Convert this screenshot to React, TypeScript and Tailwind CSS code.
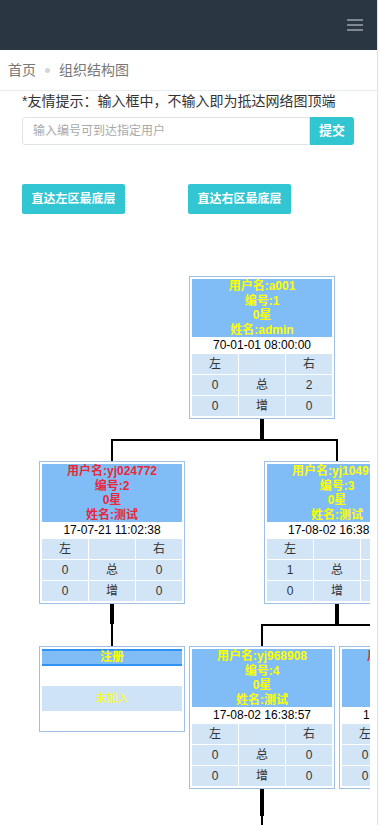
import clsx from "clsx";

type Node = {
  kind: "user" | "empty";
  name?: string;
  no?: number;
  real?: string;
  date?: string;
  red?: boolean;
  rows?: [string, string, string][];
  longStem?: boolean;
  children?: Node[];
};

const empty: Node = { kind: "empty" };

const tree: Node = {
  kind: "user",
  name: "a001",
  no: 1,
  real: "admin",
  date: "70-01-01 08:00:00",
  rows: [
    ["左", "", "右"],
    ["0", "总", "2"],
    ["0", "增", "0"],
  ],
  children: [
    {
      kind: "user",
      name: "yj024772",
      no: 2,
      real: "测试",
      date: "17-07-21 11:02:38",
      red: true,
      rows: [
        ["左", "", "右"],
        ["0", "总", "0"],
        ["0", "增", "0"],
      ],
      children: [empty],
    },
    {
      kind: "user",
      name: "yj104995",
      no: 3,
      real: "测试",
      date: "17-08-02 16:38:21",
      rows: [
        ["左", "", "右"],
        ["1", "总", "1"],
        ["0", "增", "0"],
      ],
      children: [
        {
          kind: "user",
          name: "yj968908",
          no: 4,
          real: "测试",
          date: "17-08-02 16:38:57",
          rows: [
            ["左", "", "右"],
            ["0", "总", "0"],
            ["0", "增", "0"],
          ],
          longStem: true,
          children: [empty],
        },
        {
          kind: "user",
          name: "yj517340",
          no: 5,
          real: "测试",
          date: "17-08-02 16:40:12",
          red: true,
          rows: [
            ["左", "", "右"],
            ["0", "总", "0"],
            ["0", "增", "0"],
          ],
        },
      ],
    },
  ],
};

function UserCard({ n }: { n: Node }) {
  return (
    <div className="w-[146px] border border-[#9dc0e4] bg-white p-[2px]">
      <div
        className={clsx(
          "bg-[#80bdf7] text-center text-[12px] font-bold leading-[14.5px] whitespace-nowrap",
          n.red ? "text-[#e8283a]" : "text-[#ffff00]"
        )}
      >
        <div>用户名:{n.name}</div>
        <div>编号:{n.no}</div>
        <div>0星</div>
        <div>姓名:{n.real}</div>
      </div>
      <div className="h-[16px] text-center text-[12px] leading-[16px] whitespace-nowrap text-black">{n.date}</div>
      <div className="mt-[1px] grid grid-cols-3 gap-[1px] text-center text-[12px] text-[#333]">
        {n.rows?.flat().map((c, i) => (
          <div key={i} className="h-[20px] bg-[#d2e5f7] leading-[20px]">
            {c}
          </div>
        ))}
      </div>
    </div>
  );
}

function EmptyCard() {
  return (
    <div className="w-[146px] border border-[#9dc0e4] bg-white p-[2px]">
      <div className="h-[17px] border-y-2 border-[#2f93f5] bg-[#80bdf7] text-center text-[12px] font-bold leading-[13px] text-[#ffff00]">
        注册
      </div>
      <div className="h-[20px]" />
      <div className="h-[25px] bg-[#cfe3f6] text-center text-[11px] leading-[25px] text-[#ffff00]">未加入</div>
      <div className="h-[18px]" />
    </div>
  );
}

function Subtree({ node }: { node: Node }) {
  const kids = node.children ?? [];
  return (
    <div className="flex flex-col items-center">
      <div className="px-[2px]">{node.kind === "user" ? <UserCard n={node} /> : <EmptyCard />}</div>
      {kids.length > 0 && (
        <>
          <div className={clsx("w-[4px] bg-black", node.longStem ? "h-[27px]" : "h-[20px]")} />
          <div className="flex items-start">
            {kids.map((k, i) => (
              <div key={i} className="flex flex-col items-center">
                <div className="flex h-[2px] w-full">
                  <div className={clsx("flex-1", i > 0 && "bg-black")} />
                  <div className="w-[2px] bg-black" />
                  <div className={clsx("flex-1", i < kids.length - 1 && "bg-black")} />
                </div>
                <div className="h-[20px] w-[2px] bg-black" />
                <Subtree node={k} />
              </div>
            ))}
          </div>
        </>
      )}
    </div>
  );
}

export default function App() {
  return (
    <div className="flex h-[825px] w-[379px] overflow-hidden bg-white font-['Liberation_Sans','Noto_Sans_CJK_SC',sans-serif]">
      <div className="flex w-[377px] flex-col">
        <div className="flex h-[50px] shrink-0 items-center justify-end bg-[#2b3643] pr-[14px]">
          <div className="flex flex-col gap-[3px]">
            <div className="h-[2px] w-[16px] bg-[#7d8894]" />
            <div className="h-[2px] w-[16px] bg-[#7d8894]" />
            <div className="h-[2px] w-[16px] bg-[#7d8894]" />
          </div>
        </div>

        <div className="flex h-[41px] shrink-0 items-center border-b border-[#e7ecf1] pl-[8px] text-[14px] text-[#777]">
          <span>首页</span>
          <span className="mx-[9px] h-[5px] w-[5px] rounded-full bg-[#d5d5d5]" />
          <span>组织结构图</span>
        </div>

        <div className="w-[370px] overflow-hidden">
          <div className="px-[22px]">
            <div className="text-[14px] leading-[20px] whitespace-nowrap text-[#333]">
              *友情提示：输入框中，不输入即为抵达网络图顶端
            </div>
            <div className="mt-[6px] flex h-[28px] w-[332px]">
              <input
                type="text"
                placeholder="输入编号可到达指定用户"
                className="h-full flex-1 rounded-l-[3px] border border-[#dfe3e8] px-[10px] text-[12px] text-[#333] placeholder-[#a9a9a9] focus:outline-none"
              />
              <button className="h-full w-[44px] rounded-r-[3px] bg-[#32c5d2] text-[13px] font-bold text-white">提交</button>
            </div>
            <div className="mt-[39px] flex gap-[63px]">
              <button className="h-[30px] w-[103px] rounded-[2px] bg-[#32c5d2] text-[12px] font-bold text-white">
                直达左区最底层
              </button>
              <button className="h-[30px] w-[103px] rounded-[2px] bg-[#32c5d2] text-[12px] font-bold text-white">
                直达右区最底层
              </button>
            </div>
          </div>

          <div className="mt-[62px] ml-[37px] w-max">
            <Subtree node={tree} />
          </div>
        </div>
      </div>
      <div className="w-[2px] border-l border-[#e3e3e3] bg-[#fafafa]" />
    </div>
  );
}
